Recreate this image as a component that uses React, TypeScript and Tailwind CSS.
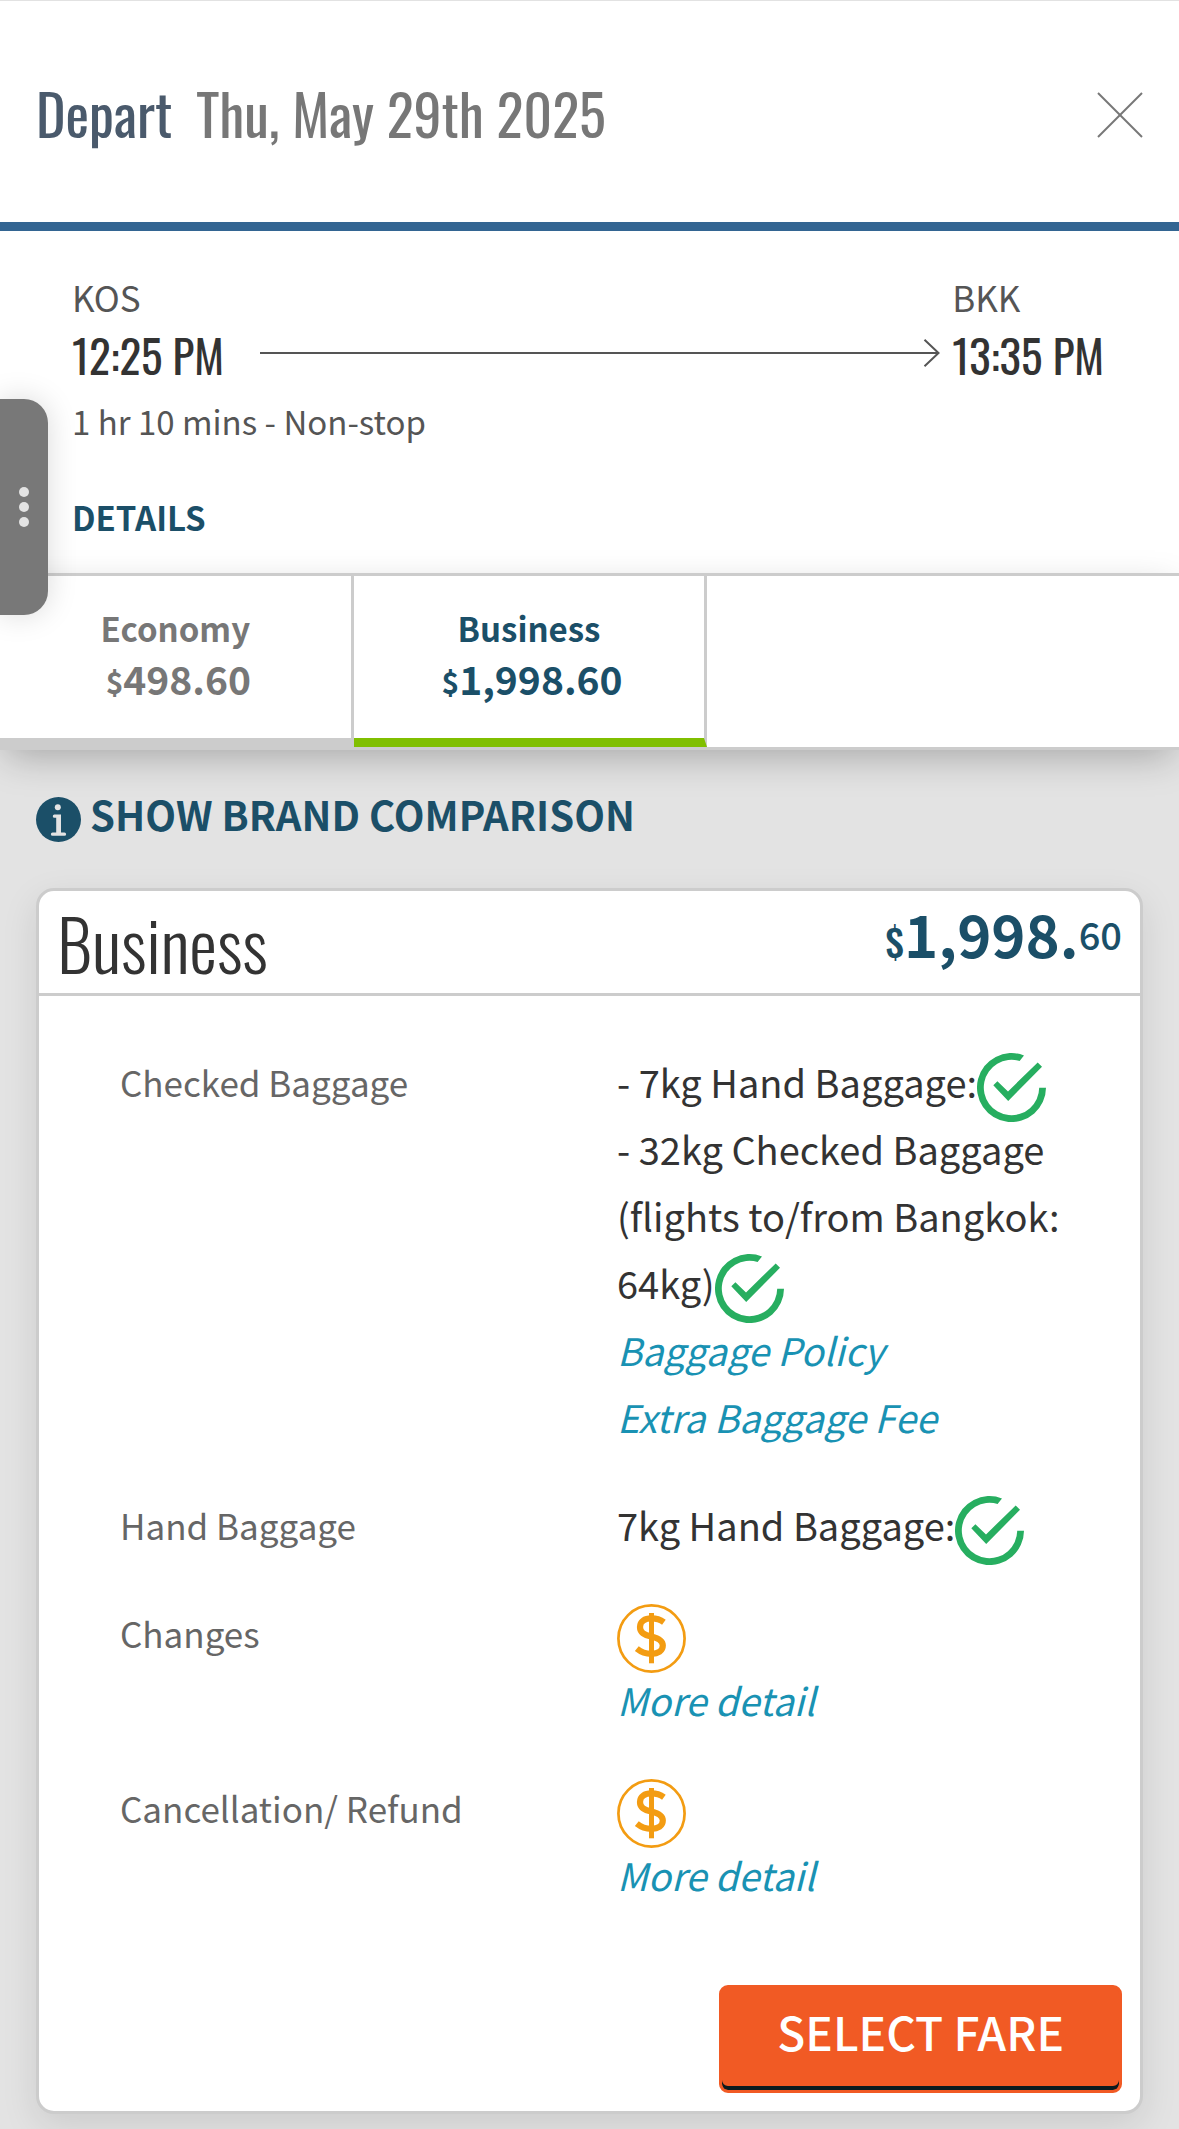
import type { ReactNode } from "react";

type Fare = {
  name: string;
  price: string;
  selected: boolean;
};

type FeatureProps = {
  label: string;
  children: ReactNode;
};

const fares: Fare[] = [
  { name: "Economy", price: "498.60", selected: false },
  { name: "Business", price: "1,998.60", selected: true },
];

function CloseIcon() {
  return (
    <svg aria-hidden="true" viewBox="0 0 46 46" className="h-[46px] w-[46px]" fill="none" stroke="currentColor" strokeWidth="2">
      <path d="M1 1L45 45" />
      <path d="M45 1L1 45" />
    </svg>
  );
}

function InfoIcon() {
  return (
    <svg aria-hidden="true" viewBox="0 0 45 45" className="h-[45px] w-[45px] shrink-0">
      <circle cx="22.5" cy="22.5" r="22.5" fill="currentColor" />
      <circle cx="21.8" cy="10.3" r="3" fill="#e3e3e3" />
      <path d="M18.4 17.6H25V35.6H28.5A1.6 1.6 0 0 1 28.5 38.8H16.5A1.6 1.6 0 0 1 16.5 35.6H20.2V20.8H18.4A1.6 1.6 0 0 1 18.4 17.6Z" fill="#e3e3e3" />
    </svg>
  );
}

function CheckIcon() {
  return (
    <svg role="img" aria-label="Included" viewBox="0 0 69 69" className="-my-2 inline-block h-[69px] w-[69px] align-middle" fill="#27ae60">
      <path d="M47 2.4A34.5 34.5 0 1 0 69 34.7H62.2A27.7 27.7 0 1 1 42.6 8Z" />
      <path d="M16.3 32.2L20.4 28.2L31 38.4L60.7 9.4L65 13.8L31.2 48Z" />
    </svg>
  );
}

function FeeIcon() {
  return (
    <svg role="img" aria-label="Fee applies" viewBox="0 0 69 69" className="-my-2 inline-block h-[69px] w-[69px] align-middle" fill="none" stroke="#f39c12">
      <circle cx="34.5" cy="34.5" r="33.1" strokeWidth="2.7" />
      <path d="M34.5 9V59.3" strokeWidth="5" />
      <path
        d="M46.9 18.2C43 15.4 39 14.4 34.5 14.4C27.5 14.4 23 17.6 23 23C23 28.6 27 30.8 34.5 32.6C42.5 34.6 45.8 37 45.8 41.6C45.8 47 41 49.8 34.5 49.8C28.5 49.8 24 48 19.8 44.6"
        strokeWidth="6.2"
      />
    </svg>
  );
}

function Feature({ label, children }: FeatureProps) {
  return (
    <div className="grid grid-cols-2">
      <dt className="text-[35px] text-[#666]">{label}</dt>
      <dd className="text-[38px] text-[#333]">{children}</dd>
    </div>
  );
}

function DetailLink({ children }: { children: ReactNode }) {
  return (
    <a href="#" className="block text-[#1992b3] italic">
      {children}
    </a>
  );
}

export default function App() {
  return (
    <div className="relative min-h-screen bg-[#e3e3e3] pb-[15px] font-['Noto_Sans_CJK_SC','Noto_Sans',sans-serif]">
      <header className="flex h-[231px] items-center justify-between border-t border-b-[9px] border-t-[#e2e2e2] border-b-[#336592] bg-white px-9">
        <h1 className="flex gap-6 pt-0.5 font-['Oswald','Roboto_Condensed',sans-serif] text-[56px] leading-[84px] font-normal text-[#777]">
          <span className="text-[#4a5a6c]">Depart</span>
          <span>Thu, May 29th 2025</span>
        </h1>
        <button type="button" aria-label="Close" className="pt-1.5 text-[#777]">
          <CloseIcon />
        </button>
      </header>

      <section className="bg-white pt-[41px] pr-[75px] pb-8 pl-[72px]">
        <div className="flex items-end">
          <div>
            <p className="text-[35px] leading-[50px] text-[#555]">KOS</p>
            <p className="font-['Oswald','Roboto_Condensed',sans-serif] text-[45px] leading-[66px] text-[#333]">12:25 PM</p>
          </div>
          <div className="ml-9 flex h-[70px] flex-1 items-center text-[#555]">
            <div className="h-0.5 flex-1 bg-current" />
            <svg aria-hidden="true" viewBox="0 0 17 28" className="-ml-4 h-7 w-[17px]" fill="none" stroke="currentColor" strokeWidth="2">
              <path d="M1.5 0.8L15.5 14L1.5 27.2" />
            </svg>
          </div>
          <div className="ml-3">
            <p className="text-[35px] leading-[50px] text-[#555]">BKK</p>
            <p className="font-['Oswald','Roboto_Condensed',sans-serif] text-[45px] leading-[66px] text-[#333]">13:35 PM</p>
          </div>
        </div>
        <p className="mt-[9px] text-[33px] leading-[48px] text-[#555]">1 hr 10 mins - Non-stop</p>
        <button type="button" className="mt-12 block text-[33px] leading-[48px] font-bold text-[#1b4f68]">
          DETAILS
        </button>
      </section>

      <div role="tablist" className="relative flex border-y-[3px] border-[#ccc] bg-white shadow-[0_12px_36px_-6px_rgba(0,0,0,0.27)]">
        {fares.map((fare) => (
          <button
            key={fare.name}
            type="button"
            role="tab"
            aria-selected={fare.selected}
            className={`w-[30%] border-r-[3px] border-b-[9px] border-r-[#ccc] pt-7 pb-[34px] font-bold ${
              fare.selected ? "border-b-[#80bf00] text-[#1b4f68]" : "border-b-[#ccc] text-[#777]"
            }`}
          >
            <span className="block text-[33px] leading-[48px]">{fare.name}</span>
            <span className="flex items-end justify-center pl-1.5 text-[39px] leading-[52px]">
              <span className="text-[30px] leading-[46px]">$</span>
              {fare.price}
            </span>
          </button>
        ))}
      </div>

      <main className="px-9 pt-9">
        <button type="button" className="flex items-end gap-[9px] text-[40px] leading-[56px] font-bold text-[#1b4f68]">
          <InfoIcon />
          SHOW BRAND COMPARISON
        </button>

        <article className="mt-[46px] rounded-[18px] border-[3px] border-[#ccc] bg-white shadow-[0_12px_36px_rgba(0,0,0,0.1)]">
          <div className="flex items-start justify-between border-b-[3px] border-[#ccc] px-[18px]">
            <h2 className="font-['Oswald','Roboto_Condensed',sans-serif] text-[70px] leading-[102px] font-light text-[#333]">Business</h2>
            <p className="flex items-center text-[#1b4f68]">
              <span className="text-[58px] leading-[84px] font-bold">
                <span className="font-['Oswald','Roboto_Condensed',sans-serif] text-[38px] font-medium">$</span>
                1,998.
              </span>
              <span className="pb-2 text-[38px] font-medium">60</span>
            </p>
          </div>

          <dl className="flex flex-col gap-[41px] pt-[52px] pr-[26px] pl-[81px] leading-[67px]">
            <Feature label="Checked Baggage">
              - 7kg Hand Baggage:
              <CheckIcon />
              <br />
              - 32kg Checked Baggage (flights to/from Bangkok: 64kg)
              <CheckIcon />
              <DetailLink>Baggage Policy</DetailLink>
              <DetailLink>Extra Baggage Fee</DetailLink>
            </Feature>
            <Feature label="Hand Baggage">
              7kg Hand Baggage:
              <CheckIcon />
            </Feature>
            <Feature label="Changes">
              <FeeIcon />
              <DetailLink>More detail</DetailLink>
            </Feature>
            <Feature label="Cancellation/ Refund">
              <FeeIcon />
              <DetailLink>More detail</DetailLink>
            </Feature>
          </dl>

          <div className="flex justify-end px-[18px] pt-[77px] pb-[18px]">
            <button
              type="button"
              className="h-[108px] rounded-[9px] border-[3px] border-[#f15a24] bg-[#f15a24] px-[55px] pb-[15px] text-[46px] leading-[87px] font-medium text-white shadow-[inset_0_-4px_0_#0b1a1e]"
            >
              SELECT FARE
            </button>
          </div>
        </article>
      </main>

      {/* side drawer handle */}
      <button
        type="button"
        aria-label="Open menu"
        className="absolute top-[399px] left-0 flex h-[216px] w-12 flex-col items-center justify-center gap-[5px] rounded-r-3xl bg-[#787878] shadow-[0_0_30px_rgba(0,0,0,0.15)]"
      >
        <span className="h-2.5 w-2.5 rounded-full bg-[#e3e3e3]" />
        <span className="h-2.5 w-2.5 rounded-full bg-[#e3e3e3]" />
        <span className="h-2.5 w-2.5 rounded-full bg-[#e3e3e3]" />
      </button>
    </div>
  );
}
